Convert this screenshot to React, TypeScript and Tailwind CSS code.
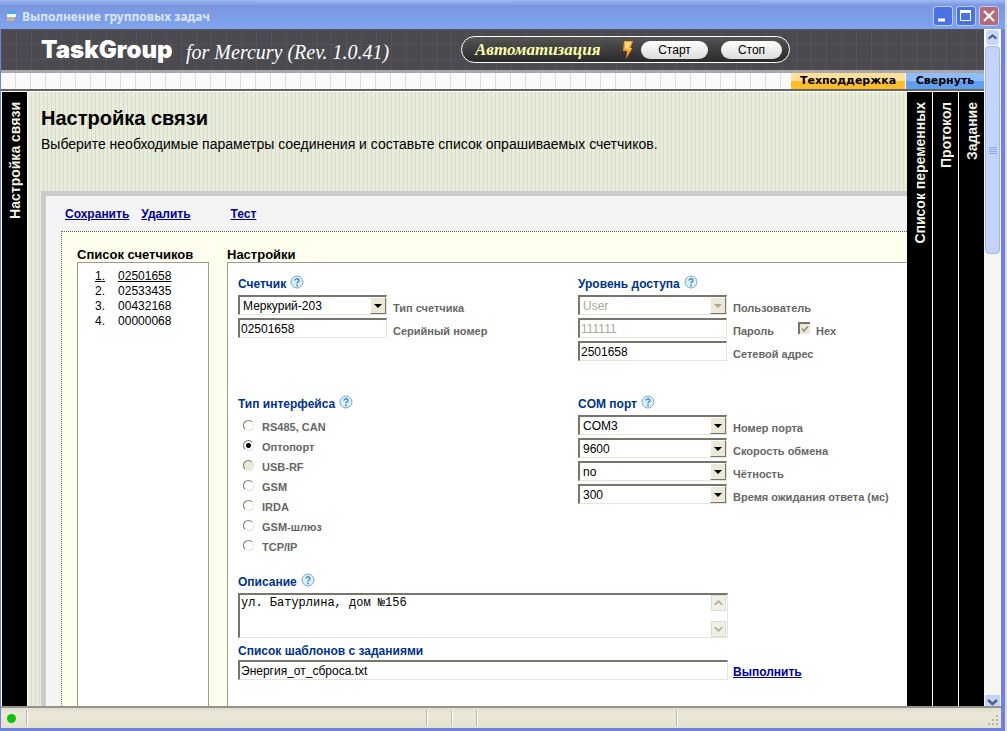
import type { ReactNode } from 'react';
import { clsx } from 'clsx';

const meters = ['02501658', '02533435', '00432168', '00000068'];

const interfaces = [
  { id: 'rs485', label: 'RS485, CAN' },
  { id: 'opto', label: 'Оптопорт' },
  { id: 'usb', label: 'USB-RF', disabled: true },
  { id: 'gsm', label: 'GSM' },
  { id: 'irda', label: 'IRDA' },
  { id: 'gateway', label: 'GSM-шлюз' },
  { id: 'tcp', label: 'TCP/IP' },
];

const comFields = [
  { id: 'port', label: 'Номер порта', value: 'COM3' },
  { id: 'speed', label: 'Скорость обмена', value: '9600' },
  { id: 'parity', label: 'Чётность', value: 'no' },
  { id: 'timeout', label: 'Время ожидания ответа (мс)', value: '300' },
];

const sunken =
  'border-t-2 border-l-2 border-r border-b border-t-[#77756c] border-l-[#77756c] border-r-[#e6e3da] border-b-[#e6e3da] bg-white';

function HelpIcon() {
  return (
    <button type="button" aria-label="Справка" className="mb-1 ml-1">
      <svg width="14" height="14" viewBox="0 0 14 14">
        <circle cx="7" cy="7" r="6" fill="#d9eefa" stroke="#7fa9c4" />
        <path d="M5 5.6C5 3.2 9 3.2 9 5.4C9 6.8 7 6.8 7 8.4" fill="none" stroke="#3f7fae" strokeWidth="1.3" />
        <circle cx="7" cy="10.4" r="0.9" fill="#3f7fae" />
      </svg>
    </button>
  );
}

function SectionTitle({ children }: { children: ReactNode }) {
  return (
    <div className="flex h-[22px] items-center">
      <h3 className="text-[12px] leading-4 font-bold text-[#003388]">{children}</h3>
      <HelpIcon />
    </div>
  );
}

function FieldLabel({ htmlFor, children }: { htmlFor: string; children: ReactNode }) {
  return (
    <label htmlFor={htmlFor} className="pt-1.5 pl-1.5 text-[11px] leading-3.5 font-bold whitespace-nowrap text-[#666]">
      {children}
    </label>
  );
}

type FieldProps = {
  id: string;
  label: string;
  value: string;
  disabled?: boolean;
};

function SelectField({ id, label, value, disabled }: FieldProps) {
  return (
    <div className="flex items-center">
      <div className="relative">
        <select
          id={id}
          disabled={disabled}
          className={clsx(
            'block h-5 w-[149px] appearance-none pl-[3px] text-[12px] leading-4 opacity-100',
            sunken,
            disabled && 'text-[#aca899]',
          )}
        >
          <option>{value}</option>
        </select>
        <span
          className={clsx(
            'pointer-events-none absolute top-0.5 right-px flex h-[17px] w-4 items-center justify-center border border-t-white border-r-[#77756c] border-b-[#77756c] border-l-white bg-[#ece9d8]',
            disabled ? 'text-[#aca899]' : 'text-black',
          )}
        >
          <svg width="8" height="4" viewBox="0 0 8 4">
            <path d="M0 0H8L4 4Z" fill="currentColor" />
          </svg>
        </span>
      </div>
      <FieldLabel htmlFor={id}>{label}</FieldLabel>
    </div>
  );
}

function TextField({ id, label, value, disabled, children }: FieldProps & { children?: ReactNode }) {
  return (
    <div className="flex items-center">
      <input
        id={id}
        defaultValue={value}
        disabled={disabled}
        className={clsx('h-5 w-[149px] pl-px text-[12px]', sunken, disabled && 'text-[#aca899]')}
      />
      <FieldLabel htmlFor={id}>{label}</FieldLabel>
      {children}
    </div>
  );
}

function HexCheckbox() {
  return (
    <>
      <span className="relative ml-6">
        <input
          id="hex"
          type="checkbox"
          defaultChecked
          disabled
          className="block h-3 w-3 appearance-none border-t-2 border-l-2 border-t-[#77756c] border-l-[#77756c] bg-[#ece9d8]"
        />
        <svg width="8" height="8" viewBox="0 0 8 8" className="pointer-events-none absolute top-[3px] left-[3px]">
          <path d="M1 3.5L3 6L7 1.5" fill="none" stroke="#9a9787" strokeWidth="1.8" />
        </svg>
      </span>
      <FieldLabel htmlFor="hex">Hex</FieldLabel>
    </>
  );
}

function SideTab({ children }: { children: ReactNode }) {
  return (
    <button
      type="button"
      className="flex w-[25px] shrink-0 flex-col items-center bg-black pt-2.5 text-[14px] leading-5 font-bold text-[#f2f2e6]"
    >
      <span className="rotate-180 whitespace-nowrap [writing-mode:vertical-rl]">{children}</span>
    </button>
  );
}

function CaptionButton({ label, className, children }: { label: string; className: string; children: ReactNode }) {
  return (
    <button
      type="button"
      aria-label={label}
      className={clsx('flex h-5 w-5 items-center justify-center rounded-[3px] border border-[#b9cdf8]', className)}
    >
      <svg width="18" height="18" viewBox="0 0 18 18" fill="none" stroke="#fff">
        {children}
      </svg>
    </button>
  );
}

function TitleBar() {
  return (
    <div className="flex h-[29px] shrink-0 items-center bg-linear-to-b from-[#a0baf4] via-[#7a96df] via-20% to-[#7fa4ee] pt-0.5 pr-1.5 pl-1">
      <svg width="14" height="14" viewBox="0 0 14 14">
        <path d="M4 2H12V6H3Z" fill="#4aa8e6" />
        <path d="M3 5H12V8H3Z" fill="#eef6fc" />
        <path d="M3 8H11L10 12H3Z" fill="#c9b391" />
      </svg>
      <h1 className="ml-1 grow pt-0.5 font-['Noto_Sans',sans-serif] text-[12px] font-bold text-[#dbe6fb]">
        Выполнение групповых задач
      </h1>
      <div className="flex gap-[3px]">
        <CaptionButton label="Свернуть окно" className="bg-[#4a72e2]">
          <path d="M4 13H11" strokeWidth="3" />
        </CaptionButton>
        <CaptionButton label="Развернуть окно" className="bg-[#4a72e2]">
          <path d="M3.5 3.5H13.5V13.5H3.5Z" />
          <path d="M3 4.5H14" strokeWidth="3" />
        </CaptionButton>
        <CaptionButton label="Закрыть окно" className="bg-[#b66a78]">
          <path d="M4 4L14 14M14 4L4 14" strokeWidth="2.2" />
        </CaptionButton>
      </div>
    </div>
  );
}

function Header() {
  const pill = 'h-[18px] rounded-full bg-linear-to-b from-white to-[#dcdcdc] text-[12px] leading-4 text-black';
  return (
    <header className="flex h-[41px] shrink-0 items-center bg-[#4b4a50] bg-[linear-gradient(#53525a_1px,transparent_1px),linear-gradient(90deg,#53525a_1px,transparent_1px)] bg-size-[15px_15px] pl-10 text-white">
      <span className="w-[145px] font-['Inter',sans-serif] text-[24px] font-black">TaskGroup</span>
      <span className="w-[275px] pt-1 font-['Liberation_Serif',serif] text-[20px] italic">
        for Mercury (Rev. 1.0.41)
      </span>
      <div className="flex h-[27px] w-[329px] items-center rounded-full border border-white bg-linear-to-b from-[#555] to-[#2a2a2a] pl-[13px]">
        <span className="w-[148px] font-['Liberation_Serif',serif] text-[17px] font-bold text-[#ffffaa] italic">
          Автоматизация
        </span>
        <svg width="10" height="18" viewBox="0 0 10 18" className="mr-2">
          <path d="M1 0H10L7.5 7H9.5L3 18L4 10H0Z" fill="#ff9a1f" />
          <path d="M2 1H8.5L5.5 7H8L5 11L6 8H2Z" fill="#ffd98a" />
        </svg>
        <button type="button" className={clsx(pill, 'mr-[13px] w-[67px]')}>
          Старт
        </button>
        <button type="button" className={clsx(pill, 'w-[61px]')}>
          Стоп
        </button>
      </div>
    </header>
  );
}

function Toolbar() {
  return (
    <div className="flex h-[21px] shrink-0 justify-end border-t-3 border-b-2 border-t-[#aaa5aa] border-b-[#66665f] bg-[#fafafa] bg-[linear-gradient(90deg,transparent_14px,#dcdcdc_14px)] bg-size-[15px_100%] font-['DejaVu_Sans',sans-serif] text-[11px] leading-4 font-bold text-black">
      <button type="button" className="w-[114px] bg-linear-to-b from-[#ffe09a] from-50% to-[#ffbe28] to-50%">
        Техподдержка
      </button>
      <button type="button" className="ml-px w-[78px] bg-linear-to-b from-[#8fbcfb] from-50% to-[#5f9ff2] to-50%">
        Свернуть
      </button>
    </div>
  );
}

function MeterList() {
  return (
    <div className="flex w-[132px] shrink-0 flex-col">
      <h3 className="h-[15px] text-[13px] leading-[15px] font-bold whitespace-nowrap">Список счетчиков</h3>
      <ol className="grow border border-b-0 border-[#9c9c94] bg-white pt-1.5 pl-[17px] text-[12px] leading-[15px]">
        {meters.map((meter, i) => (
          <li key={meter} className="flex gap-[13px]">
            <span className={clsx(i === 0 && 'underline')}>{i + 1}.</span>
            <span className={clsx(i === 0 && 'underline')}>{meter}</span>
          </li>
        ))}
      </ol>
    </div>
  );
}

function Settings() {
  return (
    <div className="flex min-w-0 grow flex-col">
      <h3 className="h-[15px] text-[13px] leading-[15px] font-bold">Настройки</h3>
      <form className="grow border-t border-l border-[#9c9c94] bg-white pt-2.5 pl-2.5">
        <div className="flex">
          <div className="w-[340px] shrink-0">
            <SectionTitle>Счетчик</SectionTitle>
            <div className="flex flex-col gap-[3px]">
              <SelectField id="type" label="Тип счетчика" value="Меркурий-203" />
              <TextField id="serial" label="Серийный номер" value="02501658" />
            </div>
          </div>
          <div>
            <SectionTitle>Уровень доступа</SectionTitle>
            <div className="flex flex-col gap-[3px]">
              <SelectField id="user" label="Пользователь" value="User" disabled />
              <TextField id="password" label="Пароль" value="111111" disabled>
                <HexCheckbox />
              </TextField>
              <TextField id="address" label="Сетевой адрес" value="2501658" />
            </div>
          </div>
        </div>

        <div className="mt-8 flex">
          <fieldset className="w-[340px] shrink-0">
            <SectionTitle>Тип интерфейса</SectionTitle>
            {interfaces.map(item => (
              <div key={item.id} className="flex h-5 items-center pl-[5px]">
                <input
                  id={item.id}
                  type="radio"
                  name="interface"
                  disabled={item.disabled}
                  defaultChecked={item.id === 'opto'}
                  className="h-[11px] w-[11px] appearance-none rounded-full border border-t-[#77756c] border-r-[#e6e3da] border-b-[#e6e3da] border-l-[#77756c] bg-white checked:bg-[radial-gradient(#000_2px,#fff_3px)] disabled:bg-[#ece9d8]"
                />
                <label htmlFor={item.id} className="pt-1 pl-2 text-[11px] font-bold text-[#666]">
                  {item.label}
                </label>
              </div>
            ))}
          </fieldset>
          <div>
            <SectionTitle>COM порт</SectionTitle>
            <div className="flex flex-col gap-[3px]">
              {comFields.map(field => (
                <SelectField key={field.id} {...field} />
              ))}
            </div>
          </div>
        </div>

        <div className="mt-4">
          <SectionTitle>Описание</SectionTitle>
          <div className="relative w-[490px]">
            <textarea
              id="description"
              aria-label="Описание"
              defaultValue="ул. Батурлина, дом №156"
              className={clsx(
                "block h-[45px] w-full resize-none overflow-hidden pl-px font-['Liberation_Mono',monospace] text-[12px] leading-4",
                sunken,
              )}
            />
            <div className="absolute top-0.5 right-px flex h-[42px] w-4 flex-col justify-between text-[#b5b2a5]">
              {['M3 9L7 5L11 9', 'M3 5L7 9L11 5'].map(d => (
                <svg key={d} width="15" height="16" viewBox="0 0 14 14" className="border border-[#dedbd0] bg-[#f1efe6]">
                  <path d={d} fill="none" stroke="currentColor" strokeWidth="2" />
                </svg>
              ))}
            </div>
          </div>
          <div className="mt-1 flex h-[18px] items-center">
            <label htmlFor="templates" className="text-[12px] font-bold text-[#003388]">
              Список шаблонов с заданиями
            </label>
          </div>
          <div className="flex items-center">
            <input
              id="templates"
              defaultValue="Энергия_от_сброса.txt"
              className={clsx('h-5 w-[490px] pl-px text-[12px]', sunken)}
            />
            <a href="#run" className="pt-1 pl-[5px] text-[12px] leading-4 font-bold text-[#000099] underline">
              Выполнить
            </a>
          </div>
        </div>
      </form>
    </div>
  );
}

function Scrollbar() {
  return (
    <div className="flex w-[17px] shrink-0 flex-col justify-between bg-[#f7f5f2] px-px">
      <div className="flex flex-col">
        <svg width="15" height="17" viewBox="0 0 15 17" className="rounded-sm border border-white bg-[#c8d6fb]">
          <path d="M3 10L7.5 6L12 10" fill="none" stroke="#4d6185" strokeWidth="2.5" />
        </svg>
        <div className="flex h-[208px] flex-col items-center justify-center gap-px rounded-sm border border-[#a3b8ea] bg-[#c3d3fd]">
          {[0, 1, 2, 3].map(i => (
            <span key={i} className="h-px w-2 bg-[#8fa8e8]" />
          ))}
        </div>
      </div>
      <svg width="15" height="11" viewBox="0 0 15 11" className="bg-[#c3d3fd]">
        <path d="M3 5L7.5 9L12 5" fill="none" stroke="#4d6185" strokeWidth="2.5" />
      </svg>
    </div>
  );
}

function StatusBar() {
  return (
    <footer className="flex h-[22px] shrink-0 border-t-2 border-[#96938a] bg-linear-to-b from-[#dfddcf] via-[#ece9d8] via-30% to-[#e4e1d0] py-0.5">
      <div className="flex w-[26px] items-center border-r border-[#bdbaa8] pl-1.5">
        <span className="h-[9px] w-[9px] rounded-full bg-[#10c010]" />
      </div>
      <div className="w-[400px] border-r border-l border-r-[#bdbaa8] border-l-white" />
      <div className="w-[25px] border-r border-l border-r-[#bdbaa8] border-l-white" />
      <div className="w-[25px] border-r border-l border-r-[#bdbaa8] border-l-white" />
      <div className="w-[200px] border-r border-l border-r-[#bdbaa8] border-l-white" />
      <div className="flex grow items-end justify-end border-l border-white pr-0.5">
        <svg width="12" height="12" viewBox="0 0 12 12" fill="#b8b4a2">
          <path d="M9 1h2v2h-2zM5 5h2v2h-2zM9 5h2v2h-2zM1 9h2v2h-2zM5 9h2v2h-2zM9 9h2v2h-2z" />
        </svg>
      </div>
    </footer>
  );
}

export default function App() {
  const link = 'text-[12px] leading-4 font-bold text-[#000099] underline';
  return (
    <div className="flex h-screen flex-col overflow-hidden border-r-2 border-[#dcdcf0] bg-[#6f82d8] font-['Liberation_Sans',Arial,sans-serif] text-black">
      <TitleBar />
      <div className="mr-1 mb-[3px] ml-px flex min-h-0 grow flex-col">
        <div className="flex min-h-0 grow">
          <div className="flex min-w-0 grow flex-col">
            <Header />
            <Toolbar />
            <div className="flex min-h-0 grow bg-white pt-px pl-px">
              <SideTab>Настройка связи</SideTab>
              <main className="ml-px flex min-w-0 grow flex-col overflow-hidden bg-[#e8ecdb] bg-[linear-gradient(90deg,transparent_3px,#d8dcc9_3px)] bg-size-[4px_100%] pt-3.5 pl-[13px]">
                <h2 className="text-[20px] leading-6 font-bold">Настройка связи</h2>
                <p className="mt-1 text-[14px] leading-5 whitespace-nowrap">
                  Выберите необходимые параметры соединения и составьте список опрашиваемых счетчиков.
                </p>
                <div className="mt-[37px] flex grow flex-col border-t-5 border-l-5 border-[#cbcbcb] bg-[#f4f4f4] pl-[15px]">
                  <nav className="flex h-[35px] items-center pl-1">
                    <a href="#save" className={link}>
                      Сохранить
                    </a>
                    <a href="#delete" className={clsx(link, 'ml-3')}>
                      Удалить
                    </a>
                    <a href="#test" className={clsx(link, 'ml-10')}>
                      Тест
                    </a>
                  </nav>
                  <div className="flex grow gap-[18px] border-t border-l border-dotted border-[#666] bg-[#ffffee] pt-[15px] pl-[15px]">
                    <MeterList />
                    <Settings />
                  </div>
                </div>
              </main>
              <div className="flex shrink-0 gap-px">
                <SideTab>Список переменных</SideTab>
                <SideTab>Протокол</SideTab>
                <SideTab>Задание</SideTab>
              </div>
            </div>
          </div>
          <Scrollbar />
        </div>
        <StatusBar />
      </div>
    </div>
  );
}
